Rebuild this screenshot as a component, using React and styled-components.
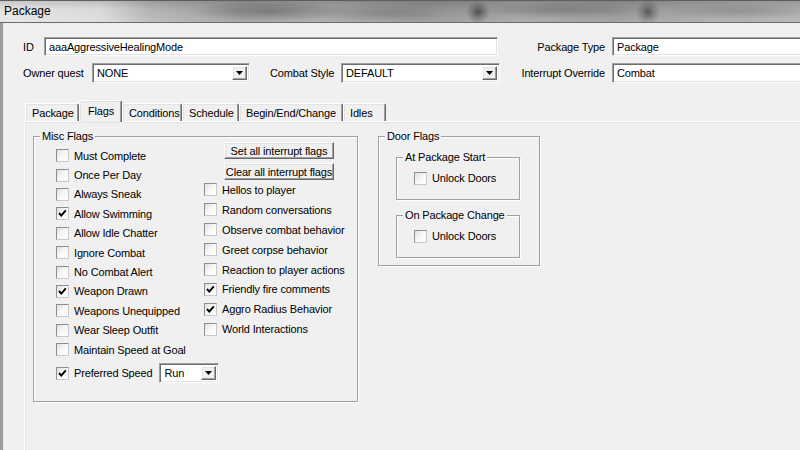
import React from "react";
import styled, { createGlobalStyle } from "styled-components";

const GlobalStyle = createGlobalStyle`
  html, body {
    margin: 0;
    padding: 0;
    background: #f0f0f0;
    overflow: hidden;
  }
  body {
    font-family: "Liberation Sans", Arial, sans-serif;
    font-size: 11px;
    letter-spacing: -0.15px;
    color: #000;
  }
`;

const miscLeft = [
  ["Must Complete", false],
  ["Once Per Day", false],
  ["Always Sneak", false],
  ["Allow Swimming", true],
  ["Allow Idle Chatter", false],
  ["Ignore Combat", false],
  ["No Combat Alert", false],
  ["Weapon Drawn", true],
  ["Weapons Unequipped", false],
  ["Wear Sleep Outfit", false],
  ["Maintain Speed at Goal", false],
];

const miscRight = [
  ["Hellos to player", false],
  ["Random conversations", false],
  ["Observe combat behavior", false],
  ["Greet corpse behavior", false],
  ["Reaction to player actions", false],
  ["Friendly fire comments", true],
  ["Aggro Radius Behavior", true],
  ["World Interactions", false],
];

const tabs = [
  { label: "Package", w: 54 },
  { label: "Flags", w: 43, active: true },
  { label: "Conditions", w: 60 },
  { label: "Schedule", w: 57 },
  { label: "Begin/End/Change", w: 104 },
  { label: "Idles", w: 43 },
];

const Check = ({ checked }) => (
  <CheckBox>
    {checked && (
      <svg width="11" height="11" viewBox="0 0 11 11">
        <polyline
          points="2,5 4.3,7.6 8.8,2.4"
          fill="none"
          stroke="#000"
          strokeWidth="2"
        />
      </svg>
    )}
  </CheckBox>
);

const Combo = ({ value, width }) => (
  <ComboBox $w={width}>
    <ComboText>{value}</ComboText>
    <DropButton>
      <svg width="7" height="4" viewBox="0 0 7 4">
        <polygon points="0,0 7,0 3.5,4" fill="#000" />
      </svg>
    </DropButton>
  </ComboBox>
);

const App = () => {
  return (
    <Window>
      <GlobalStyle />
      <TitleBar>Package</TitleBar>
      <Frame>
        <Header>
          <Cell>
            <Label $w={21}>ID</Label>
            <TextBox $w={454}>aaaAggressiveHealingMode</TextBox>
          </Cell>
          <RightLabel>Package Type</RightLabel>
          <WideBox>Package</WideBox>

          <Cell>
            <Label $w={69}>Owner quest</Label>
            <Combo value="NONE" width={158} />
            <Label $w={71} $ml={20}>
              Combat Style
            </Label>
            <Combo value="DEFAULT" width={159} />
          </Cell>
          <RightLabel>Interrupt Override</RightLabel>
          <WideBox $h={20}>Combat</WideBox>
        </Header>

        <TabArea>
          <TabStrip>
            {tabs.map((t) => (
              <Tab key={t.label} $w={t.w} $active={t.active}>
                {t.label}
              </Tab>
            ))}
          </TabStrip>
          <TabPanel>
            <Group $w={325}>
              <Legend>Misc Flags</Legend>
              <MiscBody>
                <LeftColumn>
                  {miscLeft.map(([label, on]) => (
                    <CheckRow key={label} $h={19.4}>
                      <Check checked={on} />
                      <span>{label}</span>
                    </CheckRow>
                  ))}
                  <SpeedRow>
                    <Check checked />
                    <span>Preferred Speed</span>
                    <Combo value="Run" width={60} />
                  </SpeedRow>
                </LeftColumn>
                <RightColumn>
                  <RaisedButton>Set all interrupt flags</RaisedButton>
                  <RaisedButton $mt={4}>Clear all interrupt flags</RaisedButton>
                  <RightChecks>
                    {miscRight.map(([label, on]) => (
                      <CheckRow key={label} $h={19.9}>
                        <Check checked={on} />
                        <span>{label}</span>
                      </CheckRow>
                    ))}
                  </RightChecks>
                </RightColumn>
              </MiscBody>
            </Group>

            <Group $w={162}>
              <Legend>Door Flags</Legend>
              <DoorBody>
                <Group $w={124}>
                  <Legend>At Package Start</Legend>
                  <SubBody>
                    <CheckRow $h={14}>
                      <Check />
                      <span>Unlock Doors</span>
                    </CheckRow>
                  </SubBody>
                </Group>
                <Group $w={124}>
                  <Legend>On Package Change</Legend>
                  <SubBody>
                    <CheckRow $h={14}>
                      <Check />
                      <span>Unlock Doors</span>
                    </CheckRow>
                  </SubBody>
                </Group>
              </DoorBody>
            </Group>
          </TabPanel>
        </TabArea>
      </Frame>
    </Window>
  );
};

export default App;

const Window = styled.div`
  width: 800px;
  height: 450px;
  display: flex;
  flex-direction: column;
  overflow: hidden;
`;

// aero glass caption, blurred desktop behind it
const TitleBar = styled.div`
  height: 23px;
  flex: none;
  box-sizing: border-box;
  display: flex;
  align-items: center;
  padding: 0 0 1px 4px;
  font-size: 12px;
  letter-spacing: 0;
  border-top: 1px solid #5e5e5e;
  border-bottom: 1px solid #6b6b6b;
  background:
    radial-gradient(circle at 478px 11px, rgba(30, 30, 30, 0.6) 0, rgba(30, 30, 30, 0.3) 5px, rgba(30, 30, 30, 0) 12px),
    radial-gradient(circle at 648px 11px, rgba(30, 30, 30, 0.55) 0, rgba(30, 30, 30, 0.28) 5px, rgba(30, 30, 30, 0) 12px),
    radial-gradient(ellipse 80px 10px at 270px 10px, rgba(55, 55, 55, 0.35), rgba(55, 55, 55, 0)),
    radial-gradient(ellipse 70px 9px at 380px 12px, rgba(90, 90, 90, 0.3), rgba(90, 90, 90, 0)),
    radial-gradient(ellipse 90px 8px at 560px 9px, rgba(70, 70, 70, 0.3), rgba(70, 70, 70, 0)),
    radial-gradient(ellipse 80px 8px at 740px 10px, rgba(80, 80, 80, 0.25), rgba(80, 80, 80, 0)),
    linear-gradient(180deg, rgba(0, 0, 0, 0.12) 0, rgba(0, 0, 0, 0) 40%, rgba(255, 255, 255, 0.15) 100%),
    linear-gradient(
      90deg,
      #e4e4e4 0,
      #d9d9d9 100px,
      #b3b3b3 150px,
      #999999 240px,
      #a2a2a2 330px,
      #8e8e8e 420px,
      #9e9e9e 520px,
      #949494 610px,
      #a3a3a3 700px,
      #adadad 800px
    );
`;

const Frame = styled.div`
  flex: 1;
  display: flex;
  flex-direction: column;
  padding: 14px 0 0 20px;
  border-left: 3px solid #9c9c9c;
  box-shadow: inset 1px 0 #e9e9e9;
`;

const Header = styled.div`
  display: grid;
  grid-template-columns: 477px 105px 1fr;
  row-gap: 7px;
  align-items: center;
`;

const Cell = styled.div`
  display: flex;
  align-items: center;
`;

const Label = styled.div`
  width: ${(p) => p.$w}px;
  margin-left: ${(p) => p.$ml || 0}px;
  flex: none;
  white-space: nowrap;
`;

const RightLabel = styled.div`
  text-align: right;
  white-space: nowrap;
`;

const sunken = `
  background: #fff;
  box-sizing: border-box;
  border: 1px solid;
  border-color: #a0a0a0 #ffffff #ffffff #a0a0a0;
  box-shadow: inset 1px 1px #6e6e6e, inset -1px -1px #e3e3e3;
`;

const TextBox = styled.div`
  ${sunken}
  width: ${(p) => p.$w}px;
  height: ${(p) => p.$h || 19}px;
  padding-left: 4px;
  display: flex;
  align-items: center;
  white-space: nowrap;
`;

const WideBox = styled(TextBox)`
  width: 200px;
  margin-left: 7px;
`;

const ComboBox = styled.div`
  ${sunken}
  width: ${(p) => p.$w}px;
  height: 20px;
  flex: none;
  display: flex;
  align-items: center;
  padding: 2px 2px 2px 4px;
`;

const ComboText = styled.div`
  flex: 1;
  white-space: nowrap;
`;

const raised = `
  background: #f0f0f0;
  box-sizing: border-box;
  border: 1px solid;
  border-color: #ffffff #696969 #696969 #ffffff;
  box-shadow: inset -1px -1px #a0a0a0, inset 1px 1px #e3e3e3;
`;

const DropButton = styled.div`
  ${raised}
  width: 15px;
  height: 14px;
  display: flex;
  align-items: center;
  justify-content: center;
`;

const TabArea = styled.div`
  flex: 1;
  display: flex;
  flex-direction: column;
  margin: 17px 0 0 1px;
`;

const TabStrip = styled.div`
  height: 21px;
  display: flex;
  align-items: flex-end;
  padding-left: 1px;
`;

const Tab = styled.div`
  width: ${(p) => p.$w}px;
  height: ${(p) => (p.$active ? 22 : 18)}px;
  margin-bottom: ${(p) => (p.$active ? -1 : 0)}px;
  box-sizing: border-box;
  padding: ${(p) => (p.$active ? "4px 0 0 8px" : "3px 0 0 6px")};
  background: #f0f0f0;
  border-top: 1px solid #fff;
  border-left: 1px solid #fff;
  border-right: 1px solid #696969;
  border-radius: 2px 2px 0 0;
  box-shadow: inset -1px 0 #a0a0a0, inset 1px 1px #e3e3e3;
  white-space: nowrap;
  position: ${(p) => (p.$active ? "relative" : "static")};
  z-index: ${(p) => (p.$active ? 1 : 0)};
`;

const TabPanel = styled.div`
  flex: 1;
  display: flex;
  align-items: flex-start;
  gap: 20px;
  padding: 8px 0 0 8px;
  border-top: 1px solid #fff;
  border-left: 1px solid #fff;
  box-shadow: inset 1px 1px #e3e3e3;
`;

const Group = styled.fieldset`
  width: ${(p) => p.$w}px;
  box-sizing: border-box;
  margin: 0;
  padding: 0;
  border: 1px solid #a0a0a0;
  box-shadow: inset 1px 1px #fff, 1px 1px #fff;
  min-width: 0;
`;

const Legend = styled.legend`
  margin-left: 6px;
  padding: 0 2px;
  line-height: 12px;
  font-size: 11px;
  background: #f0f0f0;
  white-space: nowrap;
`;

const MiscBody = styled.div`
  display: grid;
  grid-template-columns: 148px 1fr;
  padding: 0 0 18px 22px;
`;

const LeftColumn = styled.div`
  display: flex;
  flex-direction: column;
  padding-top: 4px;
`;

const RightColumn = styled.div`
  display: flex;
  flex-direction: column;
  align-items: flex-start;
`;

const RightChecks = styled.div`
  display: flex;
  flex-direction: column;
  align-self: stretch;
`;

const CheckRow = styled.div`
  height: ${(p) => p.$h}px;
  display: flex;
  align-items: center;
  gap: 5px;
  white-space: nowrap;
`;

const SpeedRow = styled(CheckRow)`
  height: 20px;
  margin-top: 4px;
  gap: 0;
  & > span {
    margin: 0 7px 0 5px;
  }
`;

const CheckBox = styled.div`
  width: 13px;
  height: 13px;
  flex: none;
  box-sizing: border-box;
  border: 1px solid;
  border-color: #8e8e8e #c8c8c8 #c8c8c8 #8e8e8e;
  background: linear-gradient(135deg, #dedede 0, #f6f6f6 45%, #ffffff 100%);
  display: flex;
  align-items: center;
  justify-content: center;
`;

const RaisedButton = styled.div`
  ${raised}
  width: 110px;
  height: 17px;
  margin: ${(p) => p.$mt || 0}px 0 0 20px;
  display: flex;
  align-items: center;
  justify-content: center;
  white-space: nowrap;
`;

const DoorBody = styled.div`
  display: flex;
  flex-direction: column;
  gap: 9px;
  padding: 9px 0 7px 17px;
`;

const SubBody = styled.div`
  padding: 8px 0 14px 17px;
`;
